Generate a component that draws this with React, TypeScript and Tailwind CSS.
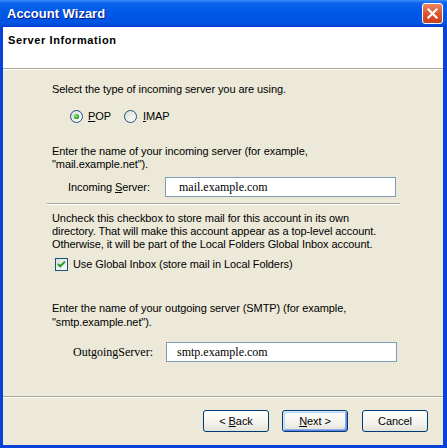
import { useId } from "react";

const Radio = ({ checked }: { checked?: boolean }) => {
  const id = useId();
  return (
    <svg width="13" height="13" viewBox="0 0 13 13" className="shrink-0">
      <defs>
        <linearGradient id={id + "bg"} x1="0" y1="0" x2="1" y2="1">
          <stop offset="0" stopColor="#DCDCD7" />
          <stop offset="1" stopColor="#FFFFFF" />
        </linearGradient>
        <radialGradient id={id + "dot"} cx="0.4" cy="0.4" r="0.6">
          <stop offset="0" stopColor="#8CEB8A" />
          <stop offset="1" stopColor="#1E9A1E" />
        </radialGradient>
      </defs>
      <circle cx="6.5" cy="6.5" r="6" fill={`url(#${id}bg)`} stroke="#1C5180" />
      {checked && <circle cx="6.5" cy="6.5" r="2.6" fill={`url(#${id}dot)`} />}
    </svg>
  );
};

const Checkbox = () => (
  <svg width="13" height="13" viewBox="0 0 13 13" className="shrink-0">
    <defs>
      <linearGradient id="cbg" x1="0" y1="0" x2="1" y2="1">
        <stop offset="0" stopColor="#DCDCD7" />
        <stop offset="1" stopColor="#FFFFFF" />
      </linearGradient>
    </defs>
    <rect x="0.5" y="0.5" width="12" height="12" fill="url(#cbg)" stroke="#1C5180" />
    <path d="M3 6 L5.2 8.3 L10 3.6" fill="none" stroke="#21A121" strokeWidth="2" />
  </svg>
);

const XpButton = ({ children, focused }: { children: React.ReactNode; focused?: boolean }) => (
  <button
    className={
      "w-[66px] h-[22px] rounded-[3px] border border-[#003C74] bg-[linear-gradient(180deg,#FFFFFF_0%,#F5F4EF_55%,#E4E1D8_100%)] text-[11px] leading-none flex items-center justify-center " +
      (focused
        ? "shadow-[inset_1px_1px_0_#CEE7FF,inset_-1px_-1px_0_#6982EE,inset_2px_2px_0_#BCD4F6,inset_-2px_-2px_0_#89ADE4]"
        : "")
    }
  >
    {children}
  </button>
);

export default function App() {
  return (
    <div className="w-[447px] h-[448px] flex flex-col bg-[#0842D8] font-['Liberation_Sans',Arial,sans-serif] text-[11px] tracking-[-0.08px] text-black select-none">
      <div className="h-[27px] shrink-0 flex items-center justify-between pl-[7px] pr-[4px] bg-[linear-gradient(180deg,#3C8CF5_0%,#0A62EE_12%,#0058E6_50%,#0054E2_85%,#0040CE_100%)]">
        <span className="text-white font-bold text-[13px] tracking-normal [text-shadow:1px_1px_0_#0A1883]">
          Account Wizard
        </span>
        <div className="w-[21px] h-[21px] rounded-[3px] border border-white bg-[linear-gradient(180deg,#E98566_0%,#E0552E_50%,#C9401E_100%)] flex items-center justify-center">
          <svg width="13" height="13" viewBox="0 0 13 13">
            <path d="M2.5 2.5 L10.5 10.5 M10.5 2.5 L2.5 10.5" stroke="#FFFFFF" strokeWidth="2.2" strokeLinecap="square" />
          </svg>
        </div>
      </div>

      <div className="flex-1 flex flex-col ml-[3px] mr-[4px] mb-[3px]">
        <div className="h-[41px] shrink-0 bg-white pl-[5px] pt-[7px]">
          <div className="font-bold leading-[13px] tracking-[0.6px]">Server Information</div>
        </div>
        <div className="h-px bg-[#ACA899]" />
        <div className="h-px bg-white" />

        <div className="flex-1 flex flex-col bg-[#ECE9D8] pl-[49px]">
          <div className="mt-[13px] leading-[13px]">Select the type of incoming server you are using.</div>

          <div className="mt-[13px] h-[14px] flex items-center ml-[18px]">
            <Radio checked />
            <span className="ml-[5px] w-[36px]">
              <u>P</u>OP
            </span>
            <Radio />
            <span className="ml-[6px]">
              <u>I</u>MAP
            </span>
          </div>

          <div className="mt-[22px] leading-[13px]">
            Enter the name of your incoming server (for example,
            <br />
            "mail.example.net").
          </div>

          <div className="mt-[6px] h-[20px] flex items-center ml-[16px]">
            <span className="w-[97px]">
              Incoming <u>S</u>erver:
            </span>
            <div className="w-[231px] h-[20px] bg-white border border-[#7F9DB9] flex items-center pl-[13px] font-['Liberation_Serif',serif] text-[12px] tracking-normal">
              mail.example.com
            </div>
          </div>

          <div className="mt-[6px] ml-[-5px] w-[353px] h-px bg-[#ACA899]" />
          <div className="ml-[-5px] w-[353px] h-px bg-white" />

          <div className="mt-[7px] leading-[13px]">
            Uncheck this checkbox to store mail for this account in its own
            <br />
            directory. That will make this account appear as a top-level account.
            <br />
            Otherwise, it will be part of the Local Folders Global Inbox account.
          </div>

          <div className="mt-[7px] h-[13px] flex items-center ml-[3px]">
            <Checkbox />
            <span className="ml-[5px]">Use Global Inbox (store mail in Local Folders)</span>
          </div>

          <div className="mt-[30px] leading-[14px]">
            Enter the name of your outgoing server (SMTP) (for example,
            <br />
            "smtp.example.net").
          </div>

          <div className="mt-[13px] h-[20px] flex items-center ml-[21px]">
            <span className="w-[93px] font-['Liberation_Serif',serif] text-[12px] tracking-normal">OutgoingServer:</span>
            <div className="w-[231px] h-[20px] bg-white border border-[#7F9DB9] flex items-center pl-[10px] font-['Liberation_Serif',serif] text-[12px] tracking-normal">
              smtp.example.com
            </div>
          </div>
        </div>

        <div className="h-px bg-[#ACA899]" />
        <div className="h-px bg-white" />
        <div className="h-[47px] shrink-0 bg-[#ECE9D8] flex justify-end items-start pt-[12px] pr-[15px]">
          <XpButton>
            &lt;&nbsp;<u>B</u>ack
          </XpButton>
          <div className="w-[13px]" />
          <XpButton focused>
            <u>N</u>ext &gt;
          </XpButton>
          <div className="w-[14px]" />
          <XpButton>Cancel</XpButton>
        </div>
      </div>
    </div>
  );
}
